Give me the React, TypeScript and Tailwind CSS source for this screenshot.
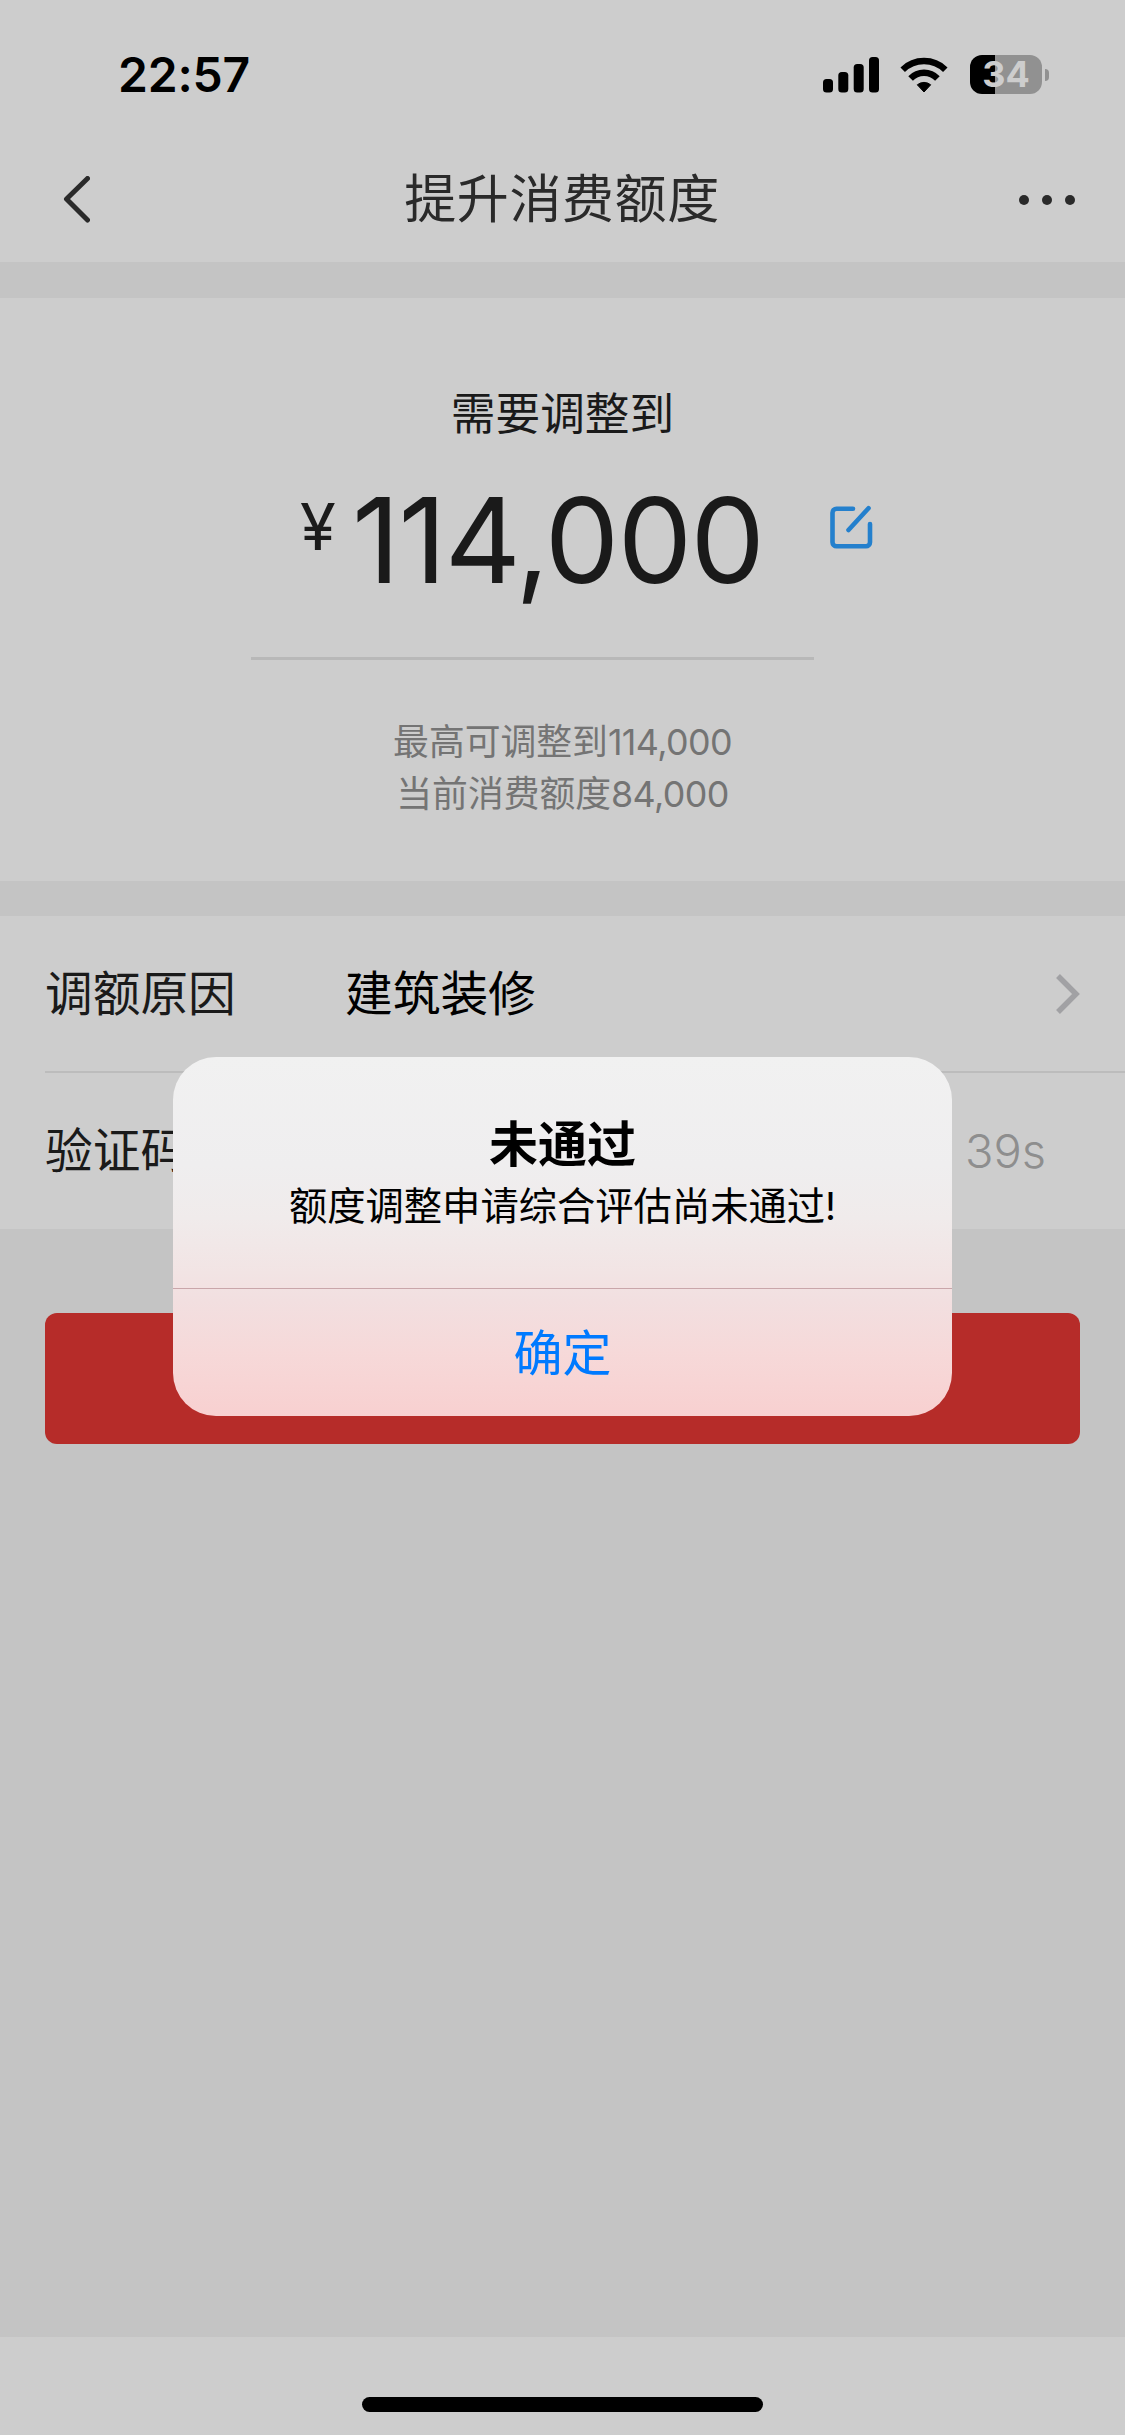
import React from 'react'

const StatusBar = () => {
    return (
        <div className="flex h-[137px] items-start justify-between pl-[118px] pr-[76px] pt-[51px] text-black">
            <span className="text-[48px] font-semibold leading-[48px] tracking-[-0.2px]">22:57</span>
            <div className="flex items-start pt-1">
                <svg className="mt-[2px] h-[36px] w-[56px]" viewBox="0 0 56 36" fill="black">
                    <rect x="0" y="22" width="10" height="13.5" rx="3.5" />
                    <rect x="15.3" y="15" width="10" height="20.5" rx="3.5" />
                    <rect x="30.7" y="7" width="10" height="28.5" rx="3.5" />
                    <rect x="46" y="0" width="10" height="35.5" rx="3.5" />
                </svg>
                <svg className="ml-[21px] mr-px mt-[1.5px] h-[36px] w-[49px]" viewBox="0 0 49 36" fill="none" stroke="black" strokeWidth="6.4">
                    <path d="M2.7 12.7a30.5 30.5 0 0 1 42.6 0" />
                    <path d="M10.6 21.5a18.5 18.5 0 0 1 26.8 0" />
                    <path d="M17.3 27.8a10.5 10.5 0 0 1 13.4 0L24 35z" fill="black" strokeWidth="1" strokeLinejoin="round" />
                </svg>
                <div className="ml-[20px] flex items-center">
                    <div className="flex h-[39px] w-[72px] items-center justify-center rounded-[12px] bg-[linear-gradient(to_right,#000_25px,#919191_25px)] text-[36px] font-bold leading-[39px] text-[#cdcdcd]">
                        34
                    </div>
                    <div className="ml-[3px] h-[12px] w-[4px] rounded-r-[6px] bg-[#919191]" />
                </div>
            </div>
        </div>
    )
}

const NavBar = () => {
    return (
        <div className="flex h-[125px] items-center justify-between pl-[63px] pr-[50px] text-[#2a2a2a]">
            <svg className="mr-[15px] h-[47px] w-[27px]" viewBox="0 0 27 47" fill="none" stroke="currentColor" strokeWidth="5" strokeLinecap="round" strokeLinejoin="round">
                <path d="M24.5 2.5 3.5 23l21 21" />
            </svg>
            <h1 className="pt-px text-[52px] leading-[60px] tracking-[0.6px]">提升消费额度</h1>
            <div className="flex gap-[13px]">
                <span className="size-[10px] rounded-full bg-[#2a2a2a]" />
                <span className="size-[10px] rounded-full bg-[#2a2a2a]" />
                <span className="size-[10px] rounded-full bg-[#2a2a2a]" />
            </div>
        </div>
    )
}

const AmountSection = () => {
    return (
        <section className="flex h-[583px] flex-col items-center bg-[#cdcdcd] pt-[86px] text-[#1a1a1a]">
            <p className="text-[44.7px] leading-[60px]">需要调整到</p>
            <div className="flex w-full items-start pl-[300px]">
                <span className="mt-[53px] w-[42px] text-[65px] leading-[60px]">¥</span>
                <span className="ml-[10px] mt-[36px] w-[478px] text-[118px] leading-[120px] tracking-[-1.6px]">114,000</span>
                <svg className="mt-[61px] h-[44px] w-[43px]" viewBox="0 0 43 44" fill="none" stroke="#2480cd" strokeWidth="4.6" strokeLinecap="round" strokeLinejoin="round">
                    <path d="M23 3.8H6.5a4 4 0 0 0-4 4v29.400a4 4 0 0 0 4 4h29.500a4 4 0 0 0 4-4V19" />
                    <path d="M38.5 3.3 18.5 25" />
                </svg>
            </div>
            <div className="ml-[-60px] mt-[57px] h-[3px] w-[563px] bg-[#b8b8b8]" />
            <div className="mt-[56px] text-center text-[35.8px] leading-[52px] text-[#747474]">
                <p>最高可调整到<span className="tracking-[-0.6px]">114,000</span></p>
                <p>当前消费额度<span className="tracking-[-0.6px]">84,000</span></p>
            </div>
        </section>
    )
}

const FormSection = () => {
    return (
        <section className="bg-[#cdcdcd] pl-[45px] text-[47.7px] text-[#1a1a1a]">
            <div className="flex h-[157px] items-center border-b-[2px] border-[#bcbcbc] pr-[45px]">
                <span className="w-[300px] pt-[2px]">调额原因</span>
                <span className="flex-1 pt-[2px] text-black">建筑装修</span>
                <svg className="h-[40px] w-[24px]" viewBox="0 0 24 40" fill="none" stroke="#a1a1a4" strokeWidth="5.5">
                    <path d="M2 2l18 18L2 38" />
                </svg>
            </div>
            <div className="flex h-[156px] items-center justify-between pr-[79px]">
                <span className="pt-[2px]">验证码</span>
                <span className="text-[47px] font-light text-[#8e8e8e]">39s</span>
            </div>
        </section>
    )
}

const AlertDialog = () => {
    return (
        <div className="absolute left-[173px] top-[1057px] flex h-[359px] w-[779px] flex-col overflow-hidden rounded-[43px] bg-[linear-gradient(to_bottom,#f1f1f1_0%,#efeeef_30%,#f0ebeb_45%,#f2e4e4_60%,#f2dfe0_68%,#f6d9d9_82%,#f8d0d0_100%)] text-center text-black">
            <div className="h-[232px] border-b border-[#c9a6aa] pt-[57px]">
                <h2 className="text-[49px] font-semibold leading-[62px]">未通过</h2>
                <p className="text-[38.3px] leading-[60px]">额度调整申请综合评估尚未通过!</p>
            </div>
            <button className="flex-1 pt-[2px] text-[49px] leading-[60px] text-[#007aff]">确定</button>
        </div>
    )
}

const App = () => {
    return (
        <div className="relative flex h-[2435px] w-[1125px] flex-col overflow-hidden bg-[#c4c4c4] font-['Inter','Noto_Sans_CJK_SC',sans-serif]">
            <header className="bg-[#cdcdcd]">
                <StatusBar />
                <NavBar />
            </header>
            <main className="flex flex-1 flex-col gap-[35px] pt-[36px]">
                <AmountSection />
                <FormSection />
                <div className="mt-[49px] px-[45px]">
                    <div className="h-[131px] rounded-[12px] bg-[#b62c29]" />
                </div>
            </main>
            <footer className="flex h-[98px] justify-center bg-[#cdcdcd] pt-[60px]">
                <div className="h-[15px] w-[401px] rounded-full bg-black" />
            </footer>
            <AlertDialog />
        </div>
    )
}

export default App
